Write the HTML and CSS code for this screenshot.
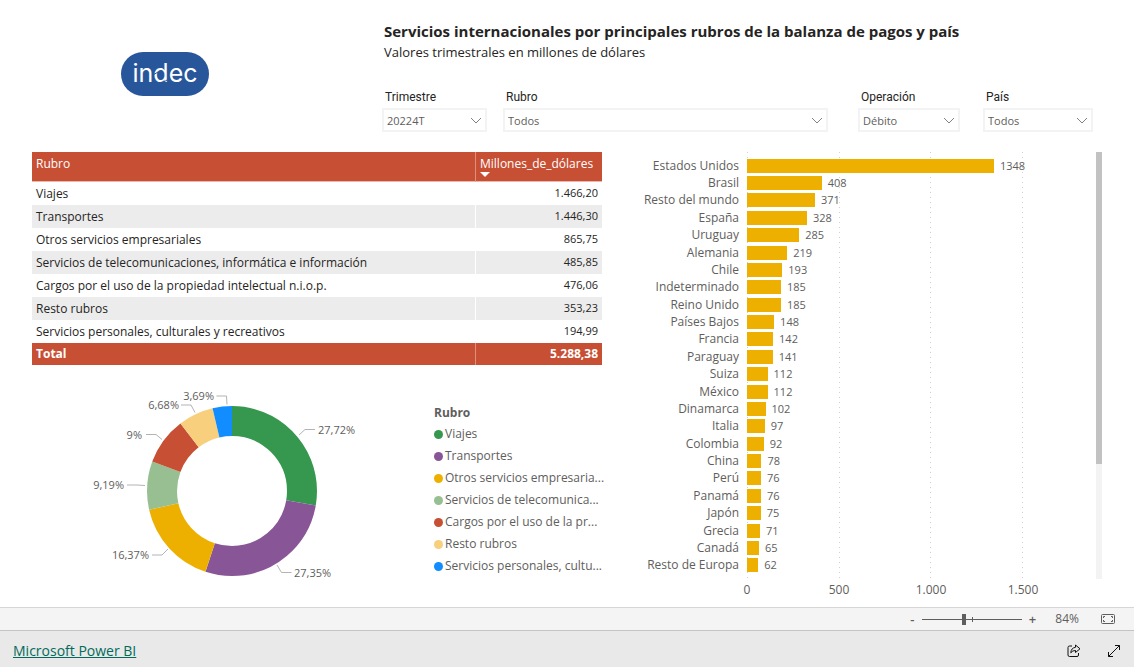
FILE: index.html
```html
<!DOCTYPE html>
<html lang="es">
<head>
<meta charset="utf-8">
<meta name="viewport" content="width=device-width, initial-scale=1">
<title>Servicios internacionales</title>
<link rel="stylesheet" href="styles.css">
</head>
<body>
<main class="report">
  <header class="report-header">
    <div class="brand">
      <svg class="logo" viewBox="0 0 88 44" role="img" aria-label="indec">
        <rect width="88" height="44" rx="22" fill="#27569b"/>
        <text class="logo-text" x="44" y="30" text-anchor="middle">indec</text>
        <path d="M32 23l5-3M40 32l6-4" stroke="#27569b"/>
      </svg>
    </div>
    <div class="heading">
      <h1 class="title">Servicios internacionales por principales rubros de la balanza de pagos y país</h1>
      <p class="subtitle">Valores trimestrales en millones de dólares</p>
      <form class="filters">
        <div class="filter-group filter-group-main">
          <label class="filter"><span class="filter-label">Trimestre</span>
            <span class="picker"><select class="select"><option>20224T</option></select><svg class="chevron" viewBox="0 0 12 7"><path d="M1 1l5 5 5-5"/></svg></span></label>
          <label class="filter"><span class="filter-label">Rubro</span>
            <span class="picker"><select class="select"><option>Todos</option></select><svg class="chevron" viewBox="0 0 12 7"><path d="M1 1l5 5 5-5"/></svg></span></label>
        </div>
        <div class="filter-group filter-group-side">
          <label class="filter"><span class="filter-label">Operación</span>
            <span class="picker"><select class="select"><option>Débito</option></select><svg class="chevron" viewBox="0 0 12 7"><path d="M1 1l5 5 5-5"/></svg></span></label>
          <label class="filter"><span class="filter-label">País</span>
            <span class="picker"><select class="select"><option>Todos</option></select><svg class="chevron" viewBox="0 0 12 7"><path d="M1 1l5 5 5-5"/></svg></span></label>
        </div>
      </form>
    </div>
  </header>

  <div class="panels">
    <div class="left">
      <table class="data">
        <thead>
          <tr><th scope="col">Rubro</th><th scope="col" class="amount-head" aria-sort="descending">Millones_de_dólares<span class="sort"></span></th></tr>
        </thead>
        <tbody>
          <tr><td>Viajes</td><td class="amount">1.466,20</td></tr>
          <tr><td>Transportes</td><td class="amount">1.446,30</td></tr>
          <tr><td>Otros servicios empresariales</td><td class="amount">865,75</td></tr>
          <tr><td>Servicios de telecomunicaciones, informática e información</td><td class="amount">485,85</td></tr>
          <tr><td>Cargos por el uso de la propiedad intelectual n.i.o.p.</td><td class="amount">476,06</td></tr>
          <tr><td>Resto rubros</td><td class="amount">353,23</td></tr>
          <tr><td>Servicios personales, culturales y recreativos</td><td class="amount">194,99</td></tr>
        </tbody>
        <tfoot>
          <tr><td>Total</td><td class="amount">5.288,38</td></tr>
        </tfoot>
      </table>

      <section class="share">
        <svg class="donut" viewBox="32 384 402 200" role="img" aria-label="Participación por rubro">
          <g class="ring" transform="rotate(-90 232 491)">
            <circle cx="232" cy="491" r="70" pathLength="100" stroke="#36984f" stroke-dasharray="27.72 72.28"/>
            <circle cx="232" cy="491" r="70" pathLength="100" stroke="#885597" stroke-dasharray="27.35 72.65" stroke-dashoffset="-27.72"/>
            <circle cx="232" cy="491" r="70" pathLength="100" stroke="#eeb000" stroke-dasharray="16.37 83.63" stroke-dashoffset="-55.07"/>
            <circle cx="232" cy="491" r="70" pathLength="100" stroke="#98bf92" stroke-dasharray="9.19 90.81" stroke-dashoffset="-71.44"/>
            <circle cx="232" cy="491" r="70" pathLength="100" stroke="#c74f34" stroke-dasharray="9 91" stroke-dashoffset="-80.63"/>
            <circle cx="232" cy="491" r="70" pathLength="100" stroke="#f7cf7d" stroke-dasharray="6.68 93.32" stroke-dashoffset="-89.63"/>
            <circle cx="232" cy="491" r="70" pathLength="100" stroke="#118dff" stroke-dasharray="3.69 96.31" stroke-dashoffset="-96.31"/>
          </g>
          <g class="leaders">
            <path d="M299 435l6-5.500h10"/>
            <path d="M277 565l4.500 7.500h10"/>
            <path d="M168 549l-6 6h-10"/>
            <path d="M145 485.500l-8-.5h-10"/>
            <path d="M162 439.500l-6-5h-10"/>
            <path d="M195 412.500l-4-7.500h-10"/>
            <path d="M227 404.500l-.5-8.500h-10"/>
          </g>
          <g class="shares">
            <text x="318" y="434">27,72%</text>
            <text x="294" y="577">27,35%</text>
            <text x="149" y="559" text-anchor="end">16,37%</text>
            <text x="124" y="489" text-anchor="end">9,19%</text>
            <text x="142" y="439" text-anchor="end">9%</text>
            <text x="179" y="409" text-anchor="end">6,68%</text>
            <text x="214" y="400" text-anchor="end">3,69%</text>
          </g>
        </svg>
        <div class="legend">
          <h2 class="legend-title">Rubro</h2>
          <ul class="legend-list">
            <li class="key key-green">Viajes</li>
            <li class="key key-purple">Transportes</li>
            <li class="key key-gold">Otros servicios empresaria...</li>
            <li class="key key-sage">Servicios de telecomunica...</li>
            <li class="key key-red">Cargos por el uso de la pr...</li>
            <li class="key key-sand">Resto rubros</li>
            <li class="key key-blue">Servicios personales, cultu...</li>
          </ul>
        </div>
      </section>
    </div>

    <section class="countries" aria-label="Millones de dólares por país">
      <div class="plot">
        <div class="gridlines"><span></span><span></span><span></span><span></span></div>
        <ul class="bars">
          <li class="row"><span class="country">Estados Unidos</span><span class="track"><span class="bar" style="width:72%"></span>1348</span></li>
          <li class="row"><span class="country">Brasil</span><span class="track"><span class="bar" style="width:21.8%"></span>408</span></li>
          <li class="row"><span class="country">Resto del mundo</span><span class="track"><span class="bar" style="width:19.8%"></span>371</span></li>
          <li class="row"><span class="country">España</span><span class="track"><span class="bar" style="width:17.5%"></span>328</span></li>
          <li class="row"><span class="country">Uruguay</span><span class="track"><span class="bar" style="width:15.2%"></span>285</span></li>
          <li class="row"><span class="country">Alemania</span><span class="track"><span class="bar" style="width:11.7%"></span>219</span></li>
          <li class="row"><span class="country">Chile</span><span class="track"><span class="bar" style="width:10.3%"></span>193</span></li>
          <li class="row"><span class="country">Indeterminado</span><span class="track"><span class="bar" style="width:9.9%"></span>185</span></li>
          <li class="row"><span class="country">Reino Unido</span><span class="track"><span class="bar" style="width:9.9%"></span>185</span></li>
          <li class="row"><span class="country">Países Bajos</span><span class="track"><span class="bar" style="width:7.9%"></span>148</span></li>
          <li class="row"><span class="country">Francia</span><span class="track"><span class="bar" style="width:7.6%"></span>142</span></li>
          <li class="row"><span class="country">Paraguay</span><span class="track"><span class="bar" style="width:7.5%"></span>141</span></li>
          <li class="row"><span class="country">Suiza</span><span class="track"><span class="bar" style="width:6%"></span>112</span></li>
          <li class="row"><span class="country">México</span><span class="track"><span class="bar" style="width:6%"></span>112</span></li>
          <li class="row"><span class="country">Dinamarca</span><span class="track"><span class="bar" style="width:5.4%"></span>102</span></li>
          <li class="row"><span class="country">Italia</span><span class="track"><span class="bar" style="width:5.2%"></span>97</span></li>
          <li class="row"><span class="country">Colombia</span><span class="track"><span class="bar" style="width:4.9%"></span>92</span></li>
          <li class="row"><span class="country">China</span><span class="track"><span class="bar" style="width:4.2%"></span>78</span></li>
          <li class="row"><span class="country">Perú</span><span class="track"><span class="bar" style="width:4.1%"></span>76</span></li>
          <li class="row"><span class="country">Panamá</span><span class="track"><span class="bar" style="width:4.1%"></span>76</span></li>
          <li class="row"><span class="country">Japón</span><span class="track"><span class="bar" style="width:4%"></span>75</span></li>
          <li class="row"><span class="country">Grecia</span><span class="track"><span class="bar" style="width:3.8%"></span>71</span></li>
          <li class="row"><span class="country">Canadá</span><span class="track"><span class="bar" style="width:3.5%"></span>65</span></li>
          <li class="row"><span class="country">Resto de Europa</span><span class="track"><span class="bar" style="width:3.3%"></span>62</span></li>
        </ul>
        <div class="scroll"><div class="scroll-thumb"></div></div>
      </div>
      <div class="axis"><span>0</span><span>500</span><span>1.000</span><span>1.500</span></div>
    </section>
  </div>
</main>

<div class="zoombar">
  <button class="zoom-step" type="button" aria-label="Alejar">-</button>
  <span class="zoom-slider"><input class="range" type="range" min="0" max="100" value="41" aria-label="Zoom"></span>
  <button class="zoom-step" type="button" aria-label="Acercar">+</button>
  <span class="zoom-value">84%</span>
  <button class="icon-button" type="button" aria-label="Ajustar a la página">
    <svg class="fit" viewBox="0 0 14 10"><rect x=".5" y=".5" width="13" height="9" rx="1"/><path d="M2.500 4V2.500H4M10 2.500h1.500V4M11.500 6v1.500H10M4 7.500H2.500V6"/></svg>
  </button>
</div>

<footer class="footer">
  <a class="footer-link" href="#">Microsoft Power BI</a>
  <div class="footer-actions">
    <button class="icon-button" type="button" aria-label="Compartir">
      <svg class="footer-icon" viewBox="0 0 14 14"><path d="M5 2H2.500Q1 2 1 3.500v7.500q0 1.500 1.500 1.500h7.500q1.500 0 1.500-1.500V9"/><path d="M8.500 1l4.500 3.800-4.500 3.700V6.500Q5.500 6.300 3.800 8.800 4 4 8.500 3.300z"/></svg>
    </button>
    <button class="icon-button" type="button" aria-label="Pantalla completa">
      <svg class="footer-icon" viewBox="0 0 14 14"><path d="M1.500 12.500l11-11M8 1.500h4.500V6M1.500 8v4.500H6"/></svg>
    </button>
  </div>
</footer>
</body>
</html>
```
FILE: styles.css
```css
* {
  box-sizing: border-box;
}

body {
  margin: 0;
  min-height: 100vh;
  display: flex;
  flex-direction: column;
  background: #fff;
  color: #252423;
  font-family: "Open Sans", "Noto Sans", sans-serif;
  font-size: 11px;
  line-height: 16px;
}

h1, h2, p, ul {
  margin: 0;
  padding: 0;
}

ul {
  list-style: none;
}

button {
  padding: 0;
  border: 0;
  background: none;
  color: inherit;
  font: inherit;
}

.report {
  flex: 1;
  display: flex;
  flex-direction: column;
  padding: 21px 32px 8px;
}

.report-header {
  display: grid;
  grid-template-columns: 350fr 720fr;
}

.brand {
  padding: 31px 0 0 89px;
}

.logo {
  display: block;
  width: 88px;
  height: 44px;
}

.logo-text {
  fill: #fff;
  font-family: Inter, sans-serif;
  font-size: 25px;
}

.heading {
  padding-right: 9px;
}

.title {
  padding-left: 2px;
  font-size: 15px;
  line-height: 21px;
  font-weight: 700;
  white-space: nowrap;
}

.subtitle {
  padding-left: 2px;
  font-size: 13px;
  line-height: 20px;
}

.filters {
  display: grid;
  grid-template-columns: 446fr 235fr;
  gap: 30px;
  margin-top: 26px;
}

.filter-group {
  display: grid;
}

.filter-group-main {
  grid-template-columns: 105fr 325fr;
  gap: 16px;
}

.filter-group-side {
  grid-template-columns: 102fr 110fr;
  gap: 23px;
}

.filter-label {
  display: block;
  padding-left: 3px;
  font-family: Roboto, sans-serif;
  font-size: 12px;
  line-height: 18px;
}

.picker {
  display: grid;
  grid-template-columns: 1fr 12px;
  align-items: center;
  margin-top: 2px;
  padding-right: 3px;
  border: 2px solid #f3f3f3;
}

.select {
  appearance: none;
  grid-area: 1 / 1 / 2 / 3;
  width: 100%;
  height: 20px;
  padding: 1px 3px 0;
  border: 0;
  background: none;
  color: #605e5c;
  font: inherit;
}

.chevron {
  grid-area: 1 / 2 / 2 / 3;
  width: 12px;
  height: 7px;
  fill: none;
  stroke: #808080;
  pointer-events: none;
}

.panels {
  flex: 1;
  display: grid;
  grid-template-columns: 570fr 472fr;
  gap: 28px;
  margin-top: 20px;
}

.left {
  display: flex;
  flex-direction: column;
}

.data {
  width: 100%;
  border-collapse: separate;
  border-spacing: 0;
}

.data th,
.data td {
  height: 23px;
  padding: 0 4px;
  font-size: 12px;
  text-align: left;
}

.data th:first-child,
.data td:first-child {
  width: 444px;
  border-right: 1px solid #fff;
}

.data th {
  height: 30px;
  padding-top: 4px;
  border-bottom: 1px solid #e9b9ae;
  background: #c74f34;
  color: #fff;
  font-weight: 400;
  line-height: 16px;
  vertical-align: top;
}

.data tbody tr:nth-child(even) {
  background: #ececec;
}

.data .amount {
  text-align: right;
}

.data tbody .amount {
  padding-bottom: 2px;
  font-size: 11px;
}

.data tfoot td {
  height: 22px;
  background: #c74f34;
  color: #fff;
  font-weight: 700;
}

.data th:first-child,
.data tfoot td:first-child {
  border-right-color: #e08f7d;
}

.sort {
  display: block;
  width: 10px;
  height: 5px;
  background: #fff;
  clip-path: polygon(0 0, 100% 0, 50% 100%);
}

.share {
  display: grid;
  grid-template-columns: minmax(0, 402fr) minmax(0, 168fr);
  margin-top: 19px;
  color: #605e5c;
}

.donut {
  width: 100%;
}

.ring {
  fill: none;
  stroke-width: 30;
}

.leaders {
  fill: none;
  stroke: #b3b3b3;
}

.shares {
  fill: #605e5c;
  font-size: 11px;
}

.legend {
  padding-top: 20px;
}

.legend-title {
  font-size: 12px;
  line-height: 18px;
}

.legend-list {
  display: grid;
  grid-auto-rows: 22px;
  margin-top: 1px;
}

.key {
  display: flex;
  align-items: center;
  gap: 2px;
  font-size: 12px;
  white-space: nowrap;
}

.key::before {
  content: "";
  width: 9px;
  height: 9px;
  border-radius: 50%;
  background: var(--key);
}

.key-green { --key: #36984f; }
.key-purple { --key: #885597; }
.key-gold { --key: #eeb000; }
.key-sage { --key: #98bf92; }
.key-red { --key: #c74f34; }
.key-sand { --key: #f7cf7d; }
.key-blue { --key: #118dff; }

.countries {
  display: flex;
  flex-direction: column;
  color: #605e5c;
}

.plot {
  flex: 1;
  display: grid;
  grid-template-columns: 117px 1fr 6px;
  padding-bottom: 2px;
}

.gridlines {
  grid-area: 1 / 2;
  display: grid;
  grid-template-columns: repeat(3, 26.700%) 1fr;
  margin-right: 6px;
}

.gridlines span {
  width: 1px;
  background: repeating-linear-gradient(#d0d0d0 0 1px, transparent 1px 5px);
}

.bars {
  grid-area: 1 / 1 / 2 / 3;
  display: grid;
  grid-auto-rows: 1fr;
  margin-right: 6px;
  padding: 5px 0;
}

.row {
  display: grid;
  grid-template-columns: 109px 1fr;
  gap: 8px;
  align-items: center;
  min-height: 0;
}

.country {
  font-size: 12px;
  text-align: right;
  white-space: nowrap;
}

.track {
  display: flex;
  align-items: center;
  gap: 6px;
}

.bar {
  height: 14px;
  background: #eeb000;
}

.scroll {
  grid-area: 1 / 3;
  background: #f3f3f3;
}

.scroll-thumb {
  height: 73%;
  background: #c2c2c2;
}

.axis {
  display: grid;
  grid-template-columns: repeat(4, 92px);
  padding-left: 71px;
  font-size: 12px;
  line-height: 18px;
  text-align: center;
}

.zoombar {
  display: flex;
  align-items: center;
  justify-content: flex-end;
  height: 24px;
  padding-right: 19px;
  border-top: 1px solid #d6d6d6;
  border-bottom: 1px solid #c4c4c4;
  background: #f4f4f4;
  color: #605e5c;
}

.zoom-step {
  width: 14px;
  font-size: 13px;
  font-weight: 600;
}

.zoom-slider {
  position: relative;
  display: flex;
  width: 100px;
  margin: 0 3px;
}

.zoom-slider::after {
  content: "";
  position: absolute;
  left: 50px;
  top: 3px;
  width: 1px;
  height: 5px;
  background: #605e5c;
}

.range {
  appearance: none;
  width: 100%;
  height: 11px;
  margin: 0;
  background: linear-gradient(#605e5c, #605e5c) center / 100% 1px no-repeat;
}

.range::-webkit-slider-thumb {
  appearance: none;
  width: 4px;
  height: 11px;
  background: #605e5c;
}

.zoom-value {
  margin: 0 22px 0 16px;
  font-size: 12px;
}

.icon-button {
  display: flex;
}

.fit {
  width: 14px;
  height: 10px;
  fill: none;
  stroke: #605e5c;
}

.footer {
  display: flex;
  align-items: center;
  justify-content: space-between;
  height: 36px;
  padding: 3px 13px 0;
  background: #e9e9e9;
}

.footer-link {
  color: #006b5b;
  font-size: 14px;
  line-height: 20px;
}

.footer-actions {
  display: flex;
  gap: 26px;
}

.footer-icon {
  width: 14px;
  height: 14px;
  fill: none;
  stroke: #111;
}
```
